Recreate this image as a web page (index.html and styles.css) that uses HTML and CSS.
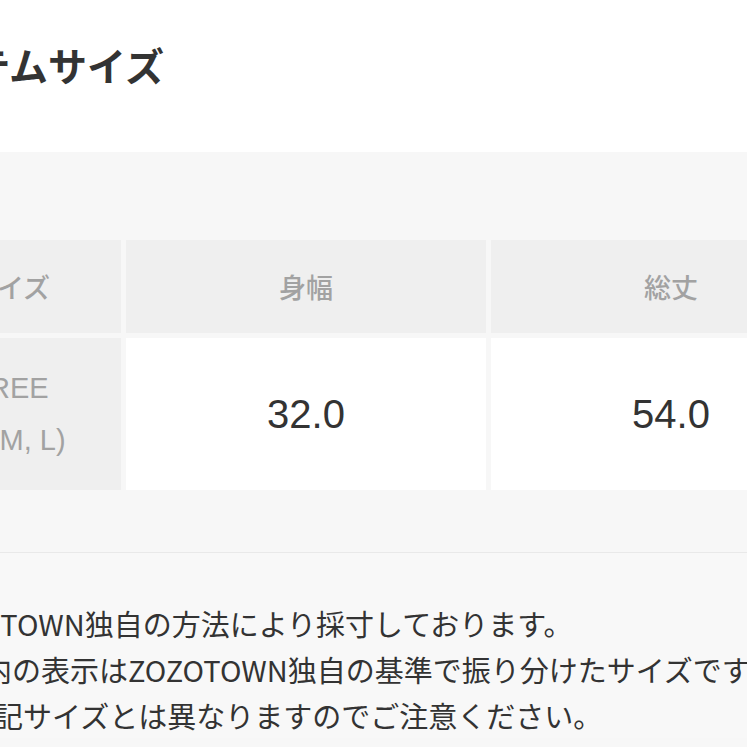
FILE: index.html
```html
<!DOCTYPE html>
<html lang="ja">
<head>
  <meta charset="UTF-8" />
  <meta name="viewport" content="width=device-width, initial-scale=1.0"/>
  <title>アイテムサイズ</title>
  <link rel="stylesheet" href="styles.css">
</head>
<body>
  <header class="title-bar">
    <h2>アイテムサイズ</h2>
  </header>

  <section class="size-area">
    <div class="size-table">
      <div class="cell head">サイズ</div>
      <div class="cell head">身幅</div>
      <div class="cell head">総丈</div>

      <div class="cell size-name">
        <span>FREE</span>
        <span>(S, M, L)</span>
      </div>
      <div class="cell value">32.0</div>
      <div class="cell value">54.0</div>
    </div>
  </section>

  <ul class="notes">
    <li>※ZOZOTOWN独自の方法により採寸しております。</li>
    <li>※（）内の表示はZOZOTOWN独自の基準で振り分けたサイズです。</li>
    <li class="cont">表記サイズとは異なりますのでご注意ください。</li>
  </ul>
</body>
</html>
```

FILE: styles.css
```css
:root {
  --text-color: #333333;
  --muted: #a2a2a2;
  --panel: #f7f7f7;
  --head-bg: #efefef;
  --white: #ffffff;
  --jp: "Noto Sans CJK JP", "Noto Sans", sans-serif;
  --latin: "Liberation Sans", Arial, sans-serif;
}

* {
  box-sizing: border-box;
  margin: 0;
  padding: 0;
}

html, body {
  width: 747px;
  height: 747px;
  overflow: hidden;
}

body {
  font-family: var(--jp);
  background-color: var(--panel);
  color: var(--text-color);
}

.title-bar {
  background-color: var(--white);
  height: 152px;
  padding-top: 36px;
  margin-left: -104px;
}

.title-bar h2 {
  font-size: 39px;
  font-weight: 700;
  line-height: 56px;
  white-space: nowrap;
}

.size-area {
  background-color: var(--panel);
  padding: 88px 0 62px;
  border-bottom: 1px solid #e9e9e9;
}

.size-table {
  display: grid;
  grid-template-columns: 222px 360px 360px;
  grid-template-rows: 93px 152px;
  gap: 5px;
  margin-left: -101px;
}

.cell {
  display: flex;
  align-items: center;
  justify-content: center;
  background-color: var(--white);
  white-space: nowrap;
}

.cell.head {
  background-color: var(--head-bg);
  color: var(--muted);
  font-size: 27px;
  font-weight: 500;
}

.cell.size-name {
  background-color: var(--head-bg);
  color: var(--muted);
  flex-direction: column;
  font-family: var(--latin);
  font-size: 29px;
  line-height: 52px;
}

.cell.value {
  font-family: var(--latin);
  font-size: 40px;
  color: var(--text-color);
}

.notes {
  list-style: none;
  background-color: #f8f8f8;
  padding-top: 47px;
  margin-left: -104px;
  font-size: 29px;
  line-height: 46px;
  white-space: nowrap;
}

.notes .cont {
  padding-left: 69px;
}
```
